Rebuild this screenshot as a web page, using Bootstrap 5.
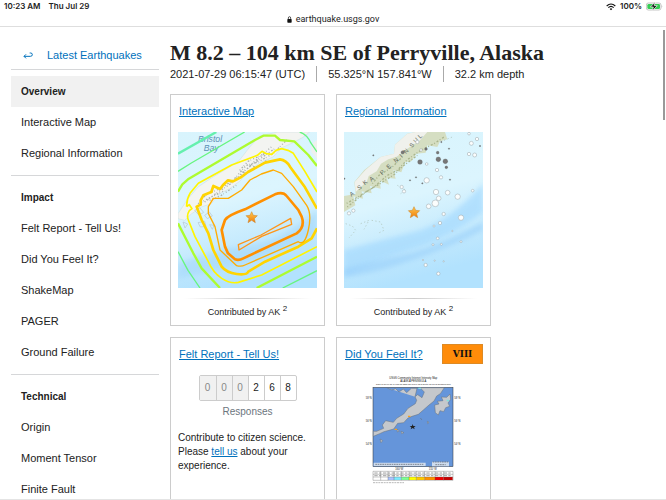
<!DOCTYPE html>
<html lang="en">
<head>
<meta charset="utf-8">
<meta name="viewport" content="width=device-width, initial-scale=1">
<title>M 8.2 – 104 km SE of Perryville, Alaska</title>
<link rel="stylesheet" href="https://cdn.jsdelivr.net/npm/bootstrap@5.3.0/dist/css/bootstrap.min.css">
<style>
  body { font-family: "Liberation Sans", Arial, sans-serif; font-size: 11px; line-height: 15px; color: #222; background: #fff; }
  a { color: #0071bc; }
  .browser-bar { font-family: Roboto, sans-serif; font-size: 9px; border-bottom: 1px solid #dedede; line-height: 13px; color: #222; }
  .status-line { font-family: Inter, sans-serif; font-size: 8px; font-weight: 600; padding: 0 3px 0 4px; }
  .page-scroll { min-height: 0; scrollbar-width: none; border-bottom: 1px solid #e4e4e4; padding: 13px 11px 0; gap: 11px; }
  .page-scroll::-webkit-scrollbar { display: none; }
  .side-nav { flex: 0 0 148px; }
  .side-nav .back-link { height: 30px; padding: 2px 11px 0 12px; gap: 14px; border-bottom: 1px solid #d6d7d9; margin-bottom: 6px; }
  .side-nav .nav-link { height: 31px; padding: 8px 10px; color: #222; }
  .side-nav .nav-link.active { background: #f1f1f1; font-size: 10px; font-weight: 700; }
  .side-nav h2 { height: 31px; padding: 8px 10px; margin: 0; font-size: 10px; line-height: 15px; font-weight: 700; }
  .side-nav hr { margin: 6px 0; opacity: 1; color: #d6d7d9; }
  .event-title { font-family: "Liberation Serif", serif; font-size: 22px; line-height: 26px; font-weight: 700; margin: 0; }
  .event-facts li { line-height: 16px; padding-right: 11px; }
  .event-facts li + li { border-left: 1px solid #aaa; padding-left: 11px; }
  .card-grid { display: grid; grid-template-columns: repeat(auto-fill, 155px); gap: 11px; margin-top: 12px; }
  .event-card { border: 1px solid #ccc; border-radius: 0; padding: 0 7px 6px; min-height: 232px; }
  .event-card h2 { font-size: 11px; line-height: 16px; margin: 0; font-weight: 400; }
  .event-card header { height: 37px; padding: 0 0 6px 1px; }
  .event-card svg { display: block; }
  .fade-rule { height: 1px; margin: 10px 6px 6px; background: linear-gradient(90deg, transparent, #ccc, transparent); }
  .credit { font-size: 9px; line-height: 14px; }
  .credit sup { font-size: 8px; }
  .odometer { border: 1px solid #ccc; border-radius: 2px; font-size: 10px; line-height: 24px; }
  .odometer span { width: 16px; text-align: center; }
  .odometer span + span { border-left: 1px solid #ccc; }
  .odometer .idle { background: #f1f1f1; color: #888; }
  .small-copy { font-size: 10px; line-height: 14px; }
  .intensity { background: #ff8c0a; color: #111; border: 1px solid #dd8a25; width: 41px; line-height: 18px; font-family: "DejaVu Serif", serif; font-size: 9px; font-weight: 700; text-align: center; }
  .scroll-thumb { position: absolute; right: 1px; top: 30px; width: 2px; height: 90px; background: #999; }
</style>
<script src="https://cdn.jsdelivr.net/npm/bootstrap@5.3.0/dist/js/bootstrap.bundle.min.js"></script>
</head>
<body class="vh-100 d-flex flex-column overflow-hidden position-relative">
<div class="browser-bar">
  <div class="status-line d-flex align-items-center justify-content-between">
    <div class="d-flex gap-2"><span>10:23 AM</span><span>Thu Jul 29</span></div>
    <div class="d-flex align-items-center">
      <svg width="10" height="8" viewBox="0 0 30 24" fill="none" stroke="#111" stroke-width="3.5" aria-hidden="true"><path d="M2 9Q15-3 28 9M7 14Q15 6 23 14"/><path d="M11 18Q15 14 19 18L15 22Z" fill="#111" stroke="none"/></svg>
      <span class="ms-1 me-1">100%</span>
      <svg width="17" height="9" viewBox="0 0 51 27" aria-hidden="true"><rect x="1" y="3" width="44" height="21" rx="6" fill="#fff" stroke="#aaa" stroke-width="2"/><rect x="4" y="6" width="38" height="15" rx="4" fill="#35cc55"/><path d="M47 10Q51 13 47 17Z" fill="#aaa"/><path d="M27 1 13 15H22L19 26 34 11H25Z" fill="#111" stroke="#fff" stroke-width="2"/></svg>
    </div>
  </div>
  <div class="d-flex justify-content-center align-items-center gap-1">
    <svg width="5" height="7" viewBox="0 0 15 21" aria-hidden="true"><rect x="1" y="9" width="13" height="11" rx="2" fill="#111"/><path d="M4 10V6Q4 2 7.500 2T11 6V10" fill="none" stroke="#111" stroke-width="2"/></svg>
    <span>earthquake.usgs.gov</span>
  </div>
</div>

<div class="page-scroll d-flex flex-grow-1 overflow-auto">
  <nav class="side-nav" aria-label="Event pages">
    <a href="#" class="back-link d-flex align-items-center text-decoration-none">
      <svg width="10" height="8" viewBox="0 0 30 24" fill="none" stroke="#0071bc" stroke-width="3" aria-hidden="true"><path d="M9 7 3 13 9 19M3 13H22Q28 13 28 8T23 3H20"/></svg>
      <span>Latest Earthquakes</span>
    </a>
    <div class="nav flex-column">
      <a class="nav-link active" href="#" aria-current="page">Overview</a>
      <a class="nav-link" href="#">Interactive Map</a>
      <a class="nav-link" href="#">Regional Information</a>
    </div>
    <hr>
    <h2>Impact</h2>
    <div class="nav flex-column">
      <a class="nav-link" href="#">Felt Report - Tell Us!</a>
      <a class="nav-link" href="#">Did You Feel It?</a>
      <a class="nav-link" href="#">ShakeMap</a>
      <a class="nav-link" href="#">PAGER</a>
      <a class="nav-link" href="#">Ground Failure</a>
    </div>
    <hr>
    <h2>Technical</h2>
    <div class="nav flex-column">
      <a class="nav-link" href="#">Origin</a>
      <a class="nav-link" href="#">Moment Tensor</a>
      <a class="nav-link" href="#">Finite Fault</a>
    </div>
  </nav>

  <main class="flex-grow-1">
    <h1 class="event-title">M 8.2 – 104 km SE of Perryville, Alaska</h1>
    <ul class="event-facts list-unstyled d-flex m-0">
      <li>2021-07-29 06:15:47 (UTC)</li>
      <li>55.325°N 157.841°W</li>
      <li>32.2 km depth</li>
    </ul>

    <div class="card-grid">
      <section class="card event-card">
        <header class="d-flex align-items-center"><h2><a href="#">Interactive Map</a></h2></header>
        <svg class="w-100" viewBox="0 0 417 468" role="img" aria-label="Map of shaking contours">
          <defs>
            <linearGradient id="sea" x1="0" y1="0" x2=".25" y2="1"><stop offset="0" stop-color="#d8f4fd"/><stop offset=".5" stop-color="#dcf5fe"/><stop offset=".8" stop-color="#c3e9fd"/><stop offset="1" stop-color="#b2e2fe"/></linearGradient>
            <linearGradient id="gold" x1="0" y1="0" x2="0" y2="1"><stop offset="0" stop-color="#ffc94d"/><stop offset="1" stop-color="#ef7d0c"/></linearGradient>
            <filter id="soft"><feGaussianBlur stdDeviation="8"/></filter>
            <path id="star" d="M0-17 5-6 17-5 8 4 11 16 0 9-11 16-8 4-17-5-5-6Z" fill="url(#gold)" stroke="#c98328" stroke-width="1.500"/>
          </defs>
          <rect width="417" height="468" fill="url(#sea)"/>
          <path d="M0 395Q110 350 210 340T417 235V310Q310 360 230 385T0 440Z" fill="#a5d8fb" opacity=".6" filter="url(#soft)"/>
          <path d="M0 245 30 200 60 165 100 138 155 105 185 84 215 45 245 12 300 0H395L375 16 345 32 310 48 285 75 245 92 215 115 185 148 155 170 125 185 100 215 70 225 40 246 20 265 0 260Z" fill="#f3f4f1" stroke="#d2e2e4" stroke-width="2"/>
          <path d="M417 25Q395 35 400 60L417 80Z" fill="#eef1ee"/>
          <g fill="none" stroke="#aab0ac" stroke-width="4" stroke-dasharray="3 6 5 4 2 7">
            <path d="M70 200 90 185 130 168 165 145 205 100 240 90 285 65 310 40 330 20M80 210 120 180 160 154 200 115 250 78 290 50M185 115 210 88 250 70 280 45M60 215 100 195 135 178M218 98 235 108 270 82M95 205 130 190 175 160M190 130 225 92 262 62"/>
          </g>
          <path d="M50 235l15-8 12 14-14 9zM80 250l14-10 9 12-15 8zM60 272l20-4 4 15-17 2zM95 278l13 2-5 12zM15 270l14 6-8 12z" fill="none" stroke="#b3c6d0" stroke-width="2"/>
          <g font-family="Liberation Sans, sans-serif" font-size="26" font-style="italic" fill="#5d91b4"><text x="60" y="29">Bristol</text><text x="77" y="56">Bay</text></g>
          <g fill="none" stroke-linejoin="round">
            <path d="M0 65 115 0" stroke="#65f0ae" stroke-width="7"/>
            <path d="M0 118 40 93 200 0M365 0Q388 8 398 32L417 60M0 359 30 415 66 468M314 468 417 416" stroke="#67f580" stroke-width="4"/>
            <path d="M0 179 13 157 30 142 231 24 256 11 291 11 306 24 349 28 391 69 417 102M0 274 46 364 71 409 126 468M236 468 417 374" stroke="#adfb2f" stroke-width="7"/>
            <path d="M26 224Q25 203 36 184L61 154 161 99 238 70 252 58 265 65 281 67 294 55 311 50 330 55 346 64 381 119 417 180M26 224 34 218 42 230 34 236Q25 250 31 264L51 314 91 389Q105 422 131 439T181 451L251 429 417 344" stroke="#fff500" stroke-width="5"/>
            <path d="M417 230 381 166 336 104Q325 84 306 82L261 92 210 120 190 135 165 148 150 145 136 158 126 171 106 162 100 180 76 190 68 205 68 218 56 224 71 264 91 304 106 354 131 404Q145 422 176 426T211 419L261 389 361 344 401 319 417 289" stroke="#ffd400" stroke-width="8"/>
            <path d="M91 244 91 224 106 199 151 199 191 174 216 144 250 126 286 114 311 124 346 164 386 220Q402 245 391 294T361 329L201 399Q190 405 176 401L126 354 111 284Z" stroke="#ffac00" stroke-width="4"/>
            <path d="M141 264Q150 250 201 232L291 187Q315 178 326 192L361 234 371 254Q382 285 356 304L196 379Q183 386 171 382L150 364 141 344 131 294Z" stroke="#ff9000" stroke-width="8"/>
            <path d="M181 338 249 309 338 259 341 277 251 313 183 354Z" stroke="#ff9518" stroke-width="4"/>
          </g>
          <use href="#star" x="221" y="256"/>
        </svg>
        <div class="fade-rule"></div>
        <p class="credit text-center mb-0">Contributed by AK <sup>2</sup></p>
      </section>

      <section class="card event-card">
        <header class="d-flex align-items-center"><h2><a href="#">Regional Information</a></h2></header>
        <svg class="w-100" viewBox="0 0 417 468" role="img" aria-label="Map of regional earthquakes">
          <rect width="417" height="468" fill="url(#sea)"/>
          <path d="M0 355Q110 325 210 300T417 155V240Q310 320 210 350T0 435Z" fill="#a6dafe" opacity=".7" filter="url(#soft)"/>
          <path d="M0 410Q100 385 190 365T417 270V295Q310 350 190 390T0 435Z" fill="#98cffa" opacity=".6" filter="url(#soft)"/>
          <path d="M35 186 31 150 60 115 110 75 150 65 153 38 190 5 215 0H303L310 22 288 28 280 45 250 40 245 62 217 65 203 87 183 91 172 121 148 115 155 140 128 137 135 158 107 145 110 170 78 162 83 184 53 178 57 200 28 193 34 220 0 240V192Z" fill="#d5dec2"/>
          <path d="M35 180 32 150 65 113 110 75 150 65 153 38 190 5 215 0H250L228 25 180 57 158 74 133 82 111 95 98 118 74 132 69 148Z" fill="#f0f1ec"/>
          <g fill="none" stroke="#a9b58c" stroke-width="4" stroke-dasharray="3 6 6 5"><path d="M8 214 50 190 90 165 130 130 160 115 190 83 230 55 270 35 300 15M10 225 65 180 108 155 150 128 180 100 220 70M85 155 105 130 145 105 175 75"/></g>
          <g fill="none" stroke="#bad1cd" stroke-width="3" stroke-dasharray="4 7"><path d="M5 275 25 282 35 295 15 318M50 275 75 265 60 292M83 265 110 270 120 295 100 305M160 160 185 174 170 185M300 25 325 15"/></g>
          <g font-family="Liberation Sans, sans-serif" font-size="18" fill="#5c6457"><text transform="translate(22 194) rotate(-34)">A</text><text transform="translate(45 175) rotate(-36)">S</text><text transform="translate(62 160) rotate(-38)">K</text><text transform="translate(82 149) rotate(-38)">A</text><text transform="translate(115 130) rotate(-44)">P</text><text transform="translate(134 112) rotate(-44)">E</text><text transform="translate(155 93) rotate(-42)">N</text><text transform="translate(173 77) rotate(-43)">I</text><text transform="translate(186 66) rotate(-47)">N</text><text transform="translate(203 48) rotate(-43)">S</text><text transform="translate(215 34) rotate(-45)">U</text><text transform="translate(229 20) rotate(-45)">L</text></g>
          <g fill="#777" stroke="#555"><circle cx="228" cy="90" r="7"/><circle cx="283" cy="82" r="7"/><circle cx="304" cy="88" r="7"/><circle cx="307" cy="106" r="4"/><circle cx="281" cy="62" r="4"/><circle cx="246" cy="51" r="4"/><circle cx="176" cy="61" r="5"/><circle cx="88" cy="70" r="2"/><circle cx="198" cy="145" r="2"/><circle cx="216" cy="136" r="2"/><circle cx="235" cy="154" r="2"/><circle cx="318" cy="143" r="2"/><circle cx="315" cy="50" r="2"/><circle cx="408" cy="42" r="2"/><circle cx="292" cy="30" r="2"/><circle cx="1" cy="140" r="2"/></g>
          <g fill="#fbfdfd" stroke="#9ba5a8" stroke-width="1.500"><circle cx="248" cy="145" r="8"/><circle cx="276" cy="180" r="8"/><circle cx="284" cy="199" r="7"/><circle cx="274" cy="214" r="10"/><circle cx="254" cy="223" r="7"/><circle cx="311" cy="182" r="7"/><circle cx="341" cy="194" r="8"/><circle cx="351" cy="257" r="8"/><circle cx="279" cy="114" r="5"/><circle cx="291" cy="136" r="5"/><circle cx="173" cy="165" r="5"/><circle cx="180" cy="178" r="5"/><circle cx="375" cy="66" r="5"/><circle cx="392" cy="69" r="6"/><circle cx="382" cy="34" r="6"/><circle cx="399" cy="21" r="5"/><circle cx="375" cy="5" r="4"/><circle cx="386" cy="176" r="4"/><circle cx="299" cy="246" r="5"/><circle cx="288" cy="273" r="5"/><circle cx="281" cy="319" r="4"/><circle cx="245" cy="399" r="5"/><circle cx="283" cy="425" r="5"/><circle cx="270" cy="282" r="3"/><circle cx="292" cy="337" r="3"/><circle cx="267" cy="338" r="3"/><circle cx="351" cy="329" r="3"/><circle cx="272" cy="386" r="2"/><circle cx="299" cy="388" r="2"/><circle cx="237" cy="384" r="2"/><circle cx="325" cy="297" r="2"/><circle cx="248" cy="96" r="4"/><circle cx="15" cy="244" r="5"/><circle cx="28" cy="236" r="5"/><circle cx="220" cy="30" r="5"/><circle cx="231" cy="54" r="4"/></g>
          <use href="#star" x="210" y="241"/>
        </svg>
        <div class="fade-rule"></div>
        <p class="credit text-center mb-0">Contributed by AK <sup>2</sup></p>
      </section>

      <section class="card event-card">
        <header class="d-flex align-items-center"><h2><a href="#">Felt Report - Tell Us!</a></h2></header>
        <div class="odometer d-flex align-self-center" role="img" aria-label="268"><span class="idle">0</span><span class="idle">0</span><span class="idle">0</span><span>2</span><span>6</span><span>8</span></div>
        <p class="small-copy text-center text-secondary mt-1 mb-2">Responses</p>
        <p class="small-copy mt-1 mb-0">Contribute to citizen science. Please <a href="#">tell us</a> about your experience.</p>
      </section>

      <section class="card event-card">
        <header class="d-flex align-items-center justify-content-between"><h2><a href="#">Did You Feel It?</a></h2><span class="intensity">VIII</span></header>
        <svg class="align-self-center" width="100" height="125" viewBox="0 15 300 375" role="img" aria-label="Community intensity map">
          <g font-family="Liberation Sans, sans-serif" font-size="8" fill="#222" text-anchor="middle"><text x="148" y="26">USGS Community Internet Intensity Map</text><text x="148" y="36">ALASKA PENINSULA</text><text x="148" y="46" font-size="6">2021-07-29 06:15:47 UTC 55.325N 157.841W M8.2 Depth: 32 km ID:ak0219neiszm</text><text x="14" y="86">58°N</text><text x="14" y="155">56°N</text><text x="14" y="225">54°N</text><text x="280" y="86">58°N</text><text x="280" y="155">56°N</text><text x="280" y="225">54°N</text><text x="106" y="301">160°W</text><text x="206" y="301">155°W</text></g>
          <rect x="27" y="52" width="240" height="238" fill="#6595da" stroke="#333" stroke-width="1.500"/>
          <g fill="#c5c8cc" stroke="#66717b" stroke-width="1.500" stroke-linejoin="round">
            <path d="M68 53 84 60 95 56 105 66 118 57 128 68 142 55H159L153 80 158 91 154 101 132 115 119 132 98 145 88 157 65 152 55 165 59 175 38 184H28V199L47 191 60 185 75 181 89 177 101 160 119 158 132 144 144 139 163 133 178 120 195 105 210 93 218 78 229 71 241 53H168L181 66 174 83 161 74 153 80"/>
            <path d="M212 105 225 102 220 94 237 92 232 81 248 82 258 72 260 88 252 99 257 109 245 113 239 125 228 122 223 135 214 128Z"/>
            <path d="M99 177l7 6-6 3zM111 184l9 4-7 3zM48 207l8 5-5 6zM190 154l5 3-4 4zM170 145l3 4z"/>
          </g>
          <path d="M132 137h7v4h-7zM92 176h7v4h-7z" fill="#f6a11d"/><path d="M163 53h8v4h-8zM248 89h7v5h-7z" fill="#7fe3dd"/>
          <path d="M146 162 148 168 155 168 150 172 152 178 146 174 140 178 142 172 137 168 144 168Z" fill="#222"/>
          <path d="M29 278H185V288H29ZM204 275H255V289H204Z" fill="#e9edf2" opacity=".8"/><path d="M206 276H253M214 284H245M34 283H178" stroke="#333" stroke-width="1.500" stroke-dasharray="5 2"/>
          <rect x="27" y="304" width="240" height="27" fill="#fff"/>
          <path d="M72 321h18v9H72z" fill="#aac4ff"/><path d="M90 321h22v9H90z" fill="#7deaff"/><path d="M112 321h23v9h-23z" fill="#7eff94"/><path d="M135 321h22v9h-22z" fill="#ff0"/><path d="M157 321h25v9h-25z" fill="#ffc800"/><path d="M182 321h31v9h-31z" fill="#ff9100"/><path d="M213 321h26v9h-26z" fill="#f20000"/><path d="M239 321h27v9h-27z" fill="#c80000"/>
          <path d="M27 304H267V331H27ZM27 313H267M27 321H267M50 304V331M72 304V331M90 304V331M112 304V331M135 304V331M157 304V331M182 304V331M213 304V331M239 304V331" fill="none" stroke="#555"/>
          <path d="M31 309H263M31 317H263" stroke="#777" stroke-width="2" stroke-dasharray="10 4 7 5"/><path d="M27 338H120" stroke="#777" stroke-width="1.500" stroke-dasharray="6 2"/>
        </svg>
      </section>
    </div>
  </main>
</div>
<div class="scroll-thumb"></div>
</body>
</html>
